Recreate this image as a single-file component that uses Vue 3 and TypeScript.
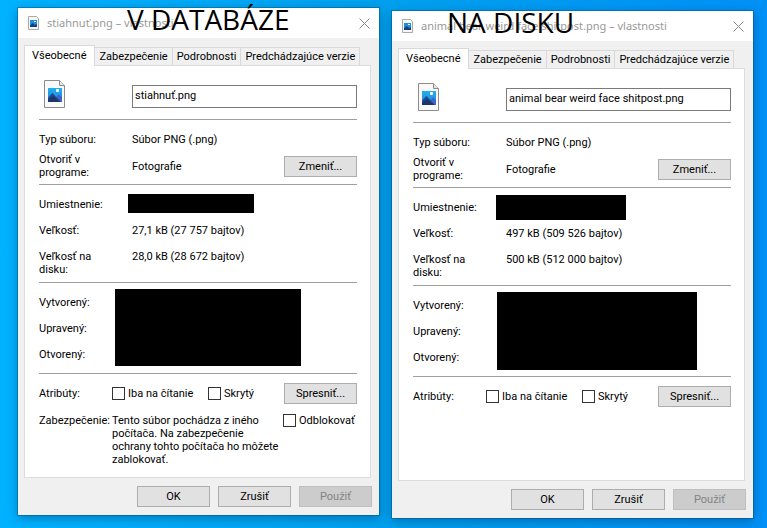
<script setup lang="ts">
interface FileDialog {
  id: string
  caption: string
  fileName: string
  size: string
  sizeOnDisk: string
  blocked: boolean
}

const tabs: string[] = ['Všeobecné', 'Zabezpečenie', 'Podrobnosti', 'Predchádzajúce verzie']

const dialogs: FileDialog[] = [
  {
    id: 'database',
    caption: 'V DATABÁZE',
    fileName: 'stiahnuť.png',
    size: '27,1 kB (27 757 bajtov)',
    sizeOnDisk: '28,0 kB (28 672 bajtov)',
    blocked: true,
  },
  {
    id: 'disk',
    caption: 'NA DISKU',
    fileName: 'animal bear weird face shitpost.png',
    size: '497 kB (509 526 bajtov)',
    sizeOnDisk: '500 kB (512 000 bajtov)',
    blocked: false,
  },
]
</script>

<template>
  <main class="desktop">
    <section v-for="d in dialogs" :key="d.id" class="window" :class="d.id">
      <header class="titlebar">
        <svg class="title-icon" viewBox="0 0 11 14" aria-hidden="true">
          <path d="M0.5 0.5H8.5L10.5 2.5V13.5H0.5Z" fill="#f8f8f8" stroke="#a8a8a8" />
          <rect x="2" y="4" width="7" height="7" fill="#1c8ee0" />
          <path d="M2 9.5L4.5 7L7 9L9 8V11H2Z" fill="#163f7c" />
          <rect x="6" y="5" width="2" height="1" fill="#fff" />
        </svg>
        <h1 class="title">{{ d.fileName }} – vlastnosti</h1>
        <button class="close" type="button" aria-label="Zavrieť">
          <svg viewBox="0 0 11 11" aria-hidden="true">
            <path d="M0.5 0.5L10.5 10.5M10.5 0.5L0.5 10.5" fill="none" stroke="#8a8a8a" />
          </svg>
        </button>
        <strong class="caption">{{ d.caption }}</strong>
      </header>

      <div class="tabs" role="tablist">
        <button
          v-for="(t, i) in tabs"
          :key="t"
          type="button"
          role="tab"
          class="tab"
          :class="{ active: i === 0 }"
          :aria-selected="i === 0"
        >{{ t }}</button>
      </div>

      <div class="panel" role="tabpanel">
        <div class="group head">
          <svg class="file-icon" viewBox="0 0 21 28" aria-hidden="true">
            <path d="M0.5 0.5H15.5L20.5 5.5V27.5H0.5Z" fill="#f9f9f9" stroke="#8c8c8c" />
            <path d="M15.5 0.5V5.5H20.5" fill="#e6e6e6" stroke="#8c8c8c" />
            <defs>
              <linearGradient :id="'sky-' + d.id" x1="0" y1="0" x2="0" y2="1">
                <stop offset="0" stop-color="#1fb0ee" />
                <stop offset="1" stop-color="#2b7ede" />
              </linearGradient>
            </defs>
            <rect x="4" y="8" width="14" height="14" :fill="'url(#sky-' + d.id + ')'" />
            <path d="M11.5 18L15 14.5L18 17.5V22H13Z" fill="#3f62c4" />
            <path d="M4 17.5L8.5 13L17 22H4Z" fill="#1c4a8c" />
            <path d="M4 20L9 16L16 22H4Z" fill="#1c3468" />
            <rect x="12" y="9" width="3" height="3" rx="1" fill="#fff" />
          </svg>
          <input class="name" type="text" :value="d.fileName" aria-label="Názov súboru" />
        </div>

        <div class="group kind">
          <span class="label">Typ súboru:</span>
          <span>Súbor PNG (.png)</span>
          <span class="label">Otvoriť v programe:</span>
          <div class="program">
            <span>Fotografie</span>
            <button class="btn" type="button">Zmeniť...</button>
          </div>
        </div>

        <div class="group sizes">
          <span class="label">Umiestnenie:</span>
          <span></span>
          <span class="label">Veľkosť:</span>
          <span>{{ d.size }}</span>
          <span class="label">Veľkosť na disku:</span>
          <span>{{ d.sizeOnDisk }}</span>
          <i class="redacted location"></i>
        </div>

        <div class="group dates">
          <span>Vytvorený:</span>
          <span>Upravený:</span>
          <span>Otvorený:</span>
          <i class="redacted times"></i>
        </div>

        <div class="attributes">
          <span>Atribúty:</span>
          <label class="check"><input type="checkbox" />Iba na čítanie</label>
          <label class="check"><input type="checkbox" />Skrytý</label>
          <button class="btn" type="button">Spresniť...</button>
        </div>

        <div v-if="d.blocked" class="security">
          <span>Zabezpečenie:</span>
          <p>Tento súbor pochádza z iného počítača. Na zabezpečenie ochrany tohto počítača ho môžete zablokovať.</p>
          <label class="check"><input type="checkbox" />Odblokovať</label>
        </div>
      </div>

      <footer class="actions">
        <button class="btn" type="button">OK</button>
        <button class="btn" type="button">Zrušiť</button>
        <button class="btn" type="button" disabled>Použiť</button>
      </footer>
    </section>
  </main>
</template>

<style>
body {
  margin: 0;
}
</style>

<style scoped>
.desktop {
  box-sizing: border-box;
  min-height: 100vh;
  padding: 8px 14px 10px 18px;
  display: grid;
  grid-template-columns: repeat(2, minmax(0, 1fr));
  gap: 13px;
  background: linear-gradient(to right, #00b2ff 0%, #00a0ee 50%, #0090f6 100%);
  font: 11px/13px Roboto, "Liberation Sans", sans-serif;
  color: #000;
}

button,
input {
  font: inherit;
  color: inherit;
  margin: 0;
  border-radius: 0;
}

.window {
  display: flex;
  flex-direction: column;
  background: #f0f0f0;
  box-shadow: 0 0 0 1px rgba(0, 70, 120, 0.4), 0 3px 10px rgba(0, 40, 80, 0.4);
}

.window.database {
  margin-bottom: 3px;
}

.window.disk {
  margin-top: 3px;
}

.titlebar {
  position: relative;
  display: flex;
  align-items: center;
  gap: 8px;
  height: 30px;
  padding: 0 9px 0 10px;
  background: #fff;
}

.title-icon {
  width: 11px;
  height: 14px;
}

.title {
  flex: 1;
  margin: 0;
  font: 11px/16px "Noto Sans", sans-serif;
  color: #999;
  white-space: nowrap;
}

.close {
  display: flex;
  padding: 0;
  border: 0;
  background: none;
}

.close svg {
  width: 11px;
  height: 11px;
}

.caption {
  position: absolute;
  top: -8px;
  left: 109px;
  font: 28px/38px "Open Sans", sans-serif;
  white-space: nowrap;
}

.disk .caption {
  left: 55px;
}

.tabs {
  display: flex;
  align-items: flex-end;
  height: 20px;
  margin: 7px 8px 0 6px;
}

.tab {
  height: 18px;
  padding: 0 4px;
  border: 1px solid #d9d9d9;
  border-width: 1px 1px 0 0;
  background: #f0f0f0;
  white-space: nowrap;
}

.tab.active {
  position: relative;
  height: 21px;
  margin-bottom: -1px;
  padding: 0 8px 2px 7px;
  border-left-width: 1px;
  background: #fff;
}

.panel {
  flex: 1;
  margin: 0 8px 0 6px;
  padding: 0 13px 11px 14px;
  border: 1px solid #dcdcdc;
  background: #fff;
}

.group {
  position: relative;
  display: grid;
  grid-template-columns: 93px minmax(0, 1fr);
  border-bottom: 1px solid #a0a0a0;
}

.label {
  padding-right: 20px;
}

.head {
  align-items: end;
  padding: 14px 0 11px;
}

.file-icon {
  width: 21px;
  height: 28px;
  margin-left: 5px;
}

.name {
  box-sizing: border-box;
  width: 100%;
  height: 23px;
  padding: 0 2px 2px;
  border: 1px solid #7a7a7a;
  background: #fff;
}

.kind {
  align-items: center;
  row-gap: 7px;
  padding: 13px 0 5px;
}

.program {
  display: flex;
  align-items: center;
  justify-content: space-between;
}

.sizes {
  grid-template-rows: 13px 13px auto;
  row-gap: 13px;
  padding: 13px 0 6px;
}

.dates {
  grid-template-columns: 1fr;
  row-gap: 13px;
  padding: 13px 0 12px;
}

.redacted {
  position: absolute;
  background: #000;
}

.location {
  top: 9px;
  left: 89px;
  width: 126px;
  height: 19px;
}

.times {
  top: 6px;
  left: 76px;
  width: 186px;
  height: 77px;
}

.disk .location {
  top: 7px;
  left: 83px;
  width: 130px;
  height: 25px;
}

.disk .times {
  left: 84px;
  width: 200px;
  height: 78px;
}

.attributes {
  display: grid;
  grid-template-columns: 73px 96px 1fr auto;
  align-items: center;
  padding-top: 9px;
}

.security {
  display: grid;
  grid-template-columns: 73px 1fr 74px;
  align-items: start;
  padding-top: 10px;
}

.security p {
  margin: 0;
  padding-right: 4px;
}

.check {
  display: flex;
  align-items: center;
  gap: 3px;
  white-space: nowrap;
}

.check input {
  appearance: none;
  box-sizing: border-box;
  flex: none;
  width: 13px;
  height: 13px;
  border: 1px solid #333;
  background: #fff;
}

.btn {
  box-sizing: border-box;
  width: 73px;
  height: 21px;
  padding: 0;
  border: 1px solid #adadad;
  background: #e1e1e1;
}

.btn:disabled {
  border-color: #bfbfbf;
  background: #ccc;
  color: #838383;
}

.actions {
  display: flex;
  justify-content: flex-end;
  gap: 8px;
  padding: 8px 7px;
}
</style>
